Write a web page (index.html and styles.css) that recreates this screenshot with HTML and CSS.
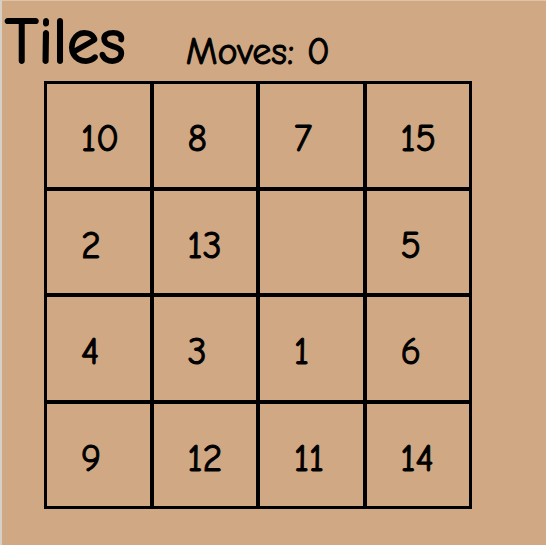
FILE: index.html
```html
<!DOCTYPE html>
<html lang="en">
<head>
<meta charset="utf-8">
<title>Tiles</title>
<link rel="stylesheet" href="styles.css">
</head>
<body>
<main class="game">
  <header class="header">
    <h1 class="title">Tiles</h1>
    <p class="moves">Moves: 0</p>
  </header>
  <div class="board">
    <button class="tile">10</button>
    <button class="tile">8</button>
    <button class="tile">7</button>
    <button class="tile">15</button>
    <button class="tile">2</button>
    <button class="tile">13</button>
    <div class="tile"></div>
    <button class="tile">5</button>
    <button class="tile">4</button>
    <button class="tile">3</button>
    <button class="tile">1</button>
    <button class="tile">6</button>
    <button class="tile">9</button>
    <button class="tile">12</button>
    <button class="tile">11</button>
    <button class="tile">14</button>
  </div>
</main>
</body>
</html>
```
FILE: styles.css
```css
* {
  box-sizing: border-box;
}

body {
  margin: 0;
  min-height: 100vh;
  background: #d0a984;
  border-left: 2px solid #d6d0c6;
  border-top: 1px solid #dfc4a8;
  color: #000;
  font-family: "Comic Sans MS", "Comic Neue", Lato, sans-serif;
}

.header {
  display: flex;
  align-items: flex-start;
  gap: 60px;
  padding-left: 3px;
  height: 80px;
}

.title {
  margin: 0;
  font-size: 64px;
  font-weight: 400;
  line-height: 82px;
  -webkit-text-stroke: 2px #000;
}

.moves {
  margin: 0;
  font-size: 38px;
  line-height: 102px;
  -webkit-text-stroke: 1px #000;
}

.board {
  display: grid;
  grid-template-columns: repeat(4, 1fr);
  gap: 4px;
  margin: 0 74px 0 42px;
  padding: 3px;
  background: #000;
}

.tile {
  display: flex;
  align-items: center;
  aspect-ratio: 1;
  border: 0;
  padding: 8px 0 0 34px;
  background: #d0a984;
  color: inherit;
  font: inherit;
  font-size: 38px;
  -webkit-text-stroke: 1px #000;
}
```
